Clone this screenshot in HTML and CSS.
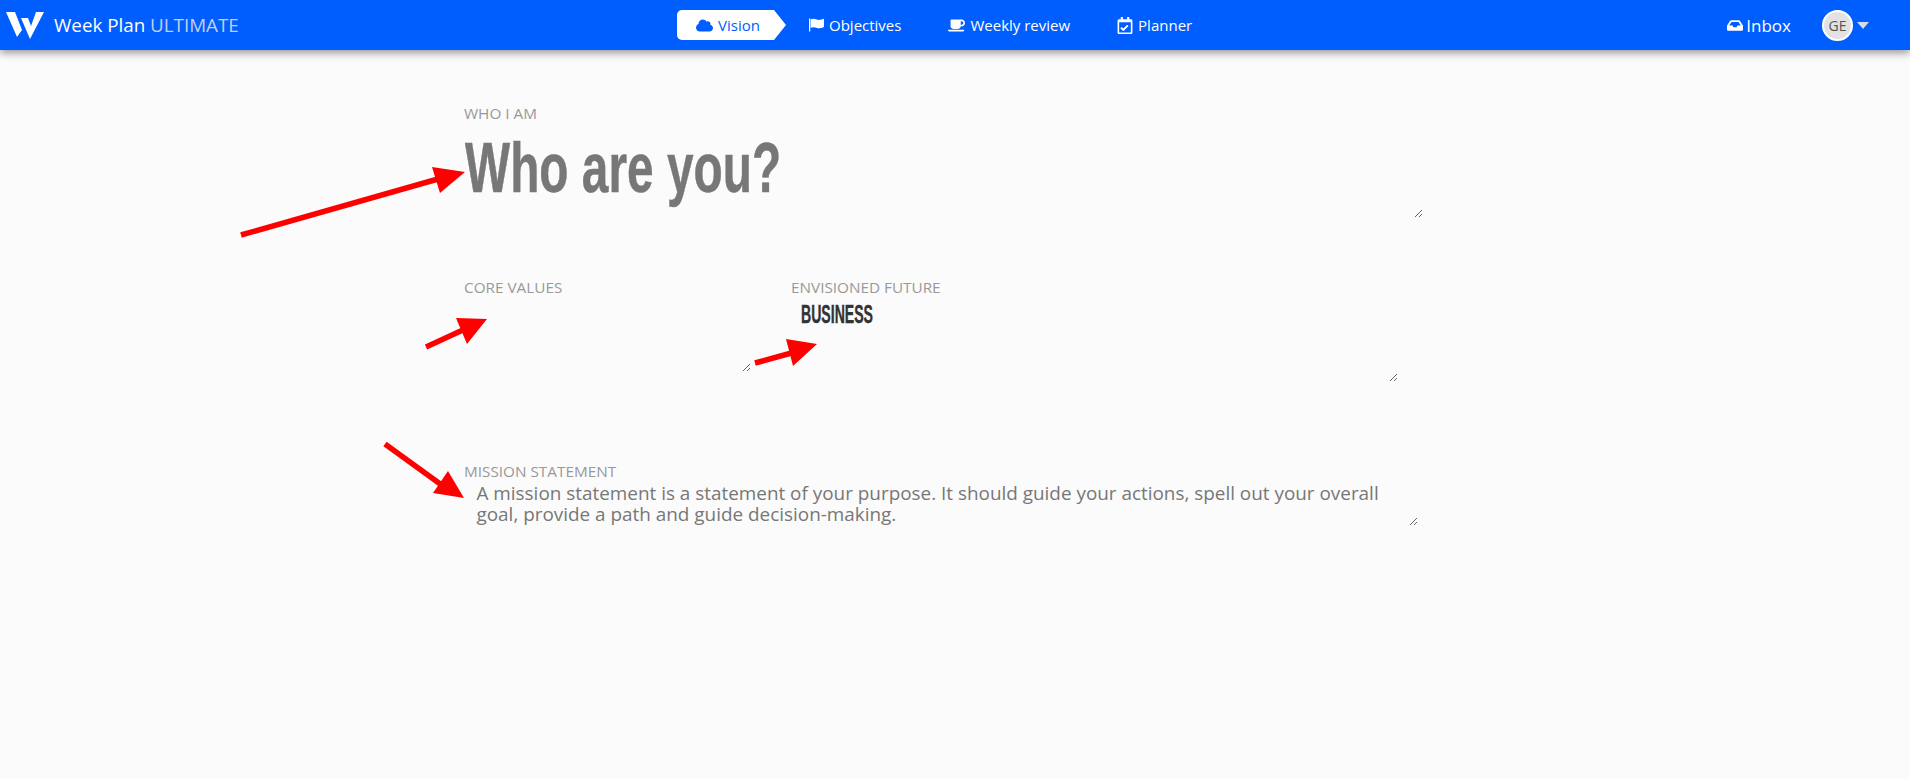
FILE: index.html
```html
<!DOCTYPE html>
<html lang="en">
<head>
<meta charset="utf-8">
<title>Week Plan ULTIMATE</title>
<link rel="stylesheet" href="styles.css">
</head>
<body>
<header class="topbar">
  <a class="brand">
    <svg class="logo" viewBox="0 0 38 28"><path d="M0 1h9l7 18-5 7z"/><path d="M15 7h7l3 8 5-14h8L24 28z"/></svg>
    <span class="brand-name">Week Plan <span class="brand-sub">ULTIMATE</span></span>
  </a>
  <nav class="nav">
    <a class="tab tab-active">
      <svg class="ico" viewBox="0 0 640 512"><path d="M537.6 226.6c4.1-10.7 6.4-22.4 6.4-34.6 0-53-43-96-96-96-19.7 0-38.1 6-53.3 16.2C367 64.2 315.3 32 256 32c-88.4 0-160 71.6-160 160 0 2.7.1 5.4.2 8.1C40.2 219.8 0 273.2 0 336c0 79.5 64.5 144 144 144h368c70.7 0 128-57.3 128-128 0-61.9-44-113.6-102.400-125.400z"/></svg>
      Vision
    </a>
    <a class="tab">
      <svg class="ico ico-flag" viewBox="0 0 532 460"><path d="M0 0h44v460H0zM60 30c30-12 62-20 100-20 75 0 120 40 190 40 55 0 110-22 182-40v290c-60 30-115 46-170 46-75 0-125-40-195-40-40 0-75 8-107 22z"/></svg>
      Objectives
    </a>
    <a class="tab">
      <svg class="ico" viewBox="0 0 640 512"><path d="M192 384h192c53 0 96-43 96-96h32c71 0 128-57 128-128S583 32 512 32H120c-13 0-24 11-24 24v232c0 53 43 96 96 96zM512 96c35 0 64 29 64 64s-29 64-64 64h-32V96h32zm48 384H48c-48 0-61-64-36-64h584c25 0 12 64-36 64z"/></svg>
      Weekly review
    </a>
    <a class="tab">
      <svg class="ico ico-tall" viewBox="0 0 448 512"><path d="M400 64h-48V12c0-7-5-12-12-12h-40c-7 0-12 5-12 12v52H160V12c0-7-5-12-12-12h-40c-7 0-12 5-12 12v52H48C21 64 0 85 0 112v352c0 27 21 48 48 48h352c27 0 48-21 48-48V112c0-27-21-48-48-48zm-6 400H54c-3 0-6-3-6-6V160h352v298c0 3-3 6-6 6zm-70-184-142 141c-5 5-12 5-17 0l-75-76c-5-5-5-12 0-17l23-22c5-5 12-5 17 0l44 44 110-109c5-5 12-5 17 0l23 23c5 5 5 12 0 16z"/></svg>
      Planner
    </a>
  </nav>
  <div class="account">
    <a class="inbox">
      <svg class="ico ico-inbox" viewBox="0 0 576 512"><path d="M567.9 243.9 462.9 86.4A48 48 0 0 0 423 65H153a48 48 0 0 0-40 21.400L8.100 243.900A48 48 0 0 0 0 270.500V400c0 26.500 21.500 48 48 48h480c26.500 0 48-21.500 48-48V270.500a48 48 0 0 0-8.100-26.600zM162.900 128h250.300l85.300 128H376l-32 64H232l-32-64H77.500z"/></svg>
      Inbox
    </a>
    <span class="avatar">GE</span>
    <span class="caret"></span>
  </div>
</header>

<main class="vision">
  <section class="field field-who">
    <label class="field-label" for="who">WHO I AM</label>
    <textarea id="who" class="input input-who"></textarea>
    <span class="display display-who">Who are you?</span>
  </section>
  <section class="columns">
    <div class="field">
      <label class="field-label" for="core">CORE VALUES</label>
      <textarea id="core" class="input input-core"></textarea>
    </div>
    <div class="field">
      <label class="field-label" for="future">ENVISIONED FUTURE</label>
      <textarea id="future" class="input input-future"></textarea>
      <span class="display display-future">BUSINESS</span>
    </div>
  </section>
  <section class="field">
    <label class="field-label" for="mission">MISSION STATEMENT</label>
    <textarea id="mission" class="input input-mission" placeholder="A mission statement is a statement of your purpose. It should guide your actions, spell out your overall goal, provide a path and guide decision-making."></textarea>
  </section>
</main>

<svg class="annotations" viewBox="0 0 1910 779">
  <path class="arrow-line" d="M241 235 445 177"/>
  <path class="arrow-head" d="M465 172 432 167 440 193z"/>
  <path class="arrow-line" d="M426 347 465 329"/>
  <path class="arrow-head" d="M487 319 456 318 467 344z"/>
  <path class="arrow-line" d="M755 363 795 352"/>
  <path class="arrow-head" d="M817 344 786 339 793 366z"/>
  <path class="arrow-line" d="M385 444 443 486"/>
  <path class="arrow-head" d="M464 498 448 471 433 493z"/>
</svg>
</body>
</html>
```
FILE: styles.css
```css
* { box-sizing: border-box; }
html, body { height: 100%; }
body {
  margin: 0;
  background: #fbfbfb;
  font-family: "Open Sans", "Noto Sans", sans-serif;
  overflow: hidden;
}
.topbar {
  display: flex;
  align-items: center;
  height: 50px;
  background: #005eff;
  color: #fff;
  box-shadow: 0 3px 8px rgba(0, 0, 0, .4);
}
.brand {
  display: flex;
  align-items: center;
  width: 677px;
  padding-left: 6px;
  gap: 10px;
}
.logo { width: 38px; height: 28px; fill: #fff; }
.brand-name { font-size: 18.800px; }
.brand-sub { color: #c3cfe6; }
.nav { display: flex; align-items: center; font-size: 15px; }
.tab {
  display: flex;
  align-items: center;
  gap: 5px;
  height: 30px;
  margin-right: 47px;
  color: #fff;
}
.tab-active {
  width: 109px;
  margin-right: 23px;
  padding-left: 19px;
  background: #fff;
  color: #005eff;
  border-radius: 5px 0 0 5px;
  clip-path: polygon(0 0, 97px 0, 109px 50%, 97px 100%, 0 100%);
}
.ico { width: 17px; height: 15px; fill: currentColor; flex: none; }
.ico-flag { width: 15px; height: 14px; }
.ico-tall { width: 16px; height: 17px; }
.ico-inbox { width: 16px; }
.account {
  display: flex;
  align-items: center;
  margin-left: auto;
  padding-right: 41px;
}
.inbox {
  display: flex;
  align-items: center;
  gap: 3px;
  margin-right: 31px;
  font-size: 17px;
}
.avatar {
  display: flex;
  align-items: center;
  justify-content: center;
  width: 31px;
  height: 31px;
  border: 2px solid #fff;
  border-radius: 50%;
  background: #e2e2e2;
  color: #555;
  font-size: 14px;
}
.caret {
  width: 0;
  height: 0;
  margin-left: 4px;
  border: 6px solid transparent;
  border-top: 7px solid #d5dbe6;
  border-bottom: 0;
}
.vision {
  display: flex;
  flex-direction: column;
  padding: 53px 0 0 464px;
}
.field { position: relative; display: flex; flex-direction: column; }
.field-label {
  height: 20px;
  font-size: 15.300px;
  line-height: 20px;
  color: #999;
}
.input {
  display: block;
  border: 0;
  outline: 0;
  background: transparent;
  font-family: inherit;
}
.input::placeholder { color: #777; opacity: 1; }
.display {
  position: absolute;
  left: 0;
  font-family: "Liberation Sans", sans-serif;
  font-weight: 700;
  white-space: nowrap;
  transform-origin: left center;
  pointer-events: none;
}
.display-who {
  top: 23px;
  left: 1px;
  color: #777;
  font-size: 70px;
  line-height: 84px;
  -webkit-text-stroke: .5px #777;
  transform: scaleX(.683);
}
.display-future {
  top: 22px;
  left: 10px;
  color: #333;
  font-size: 25px;
  line-height: 30px;
  -webkit-text-stroke: .4px #333;
  transform: scaleX(.563);
}
.field-who { margin-bottom: 59px; }
.input-who { width: 959px; height: 95px; }
.columns { display: flex; gap: 40px; margin-bottom: 79px; }
.input-core { width: 287px; height: 75px; }
.input-future { width: 607px; height: 85px; }
.input-mission {
  width: 954px;
  height: 45px;
  padding: 2px 12.500px 0;
  font-size: 18.900px;
  line-height: 21px;
}
.annotations {
  position: absolute;
  left: 0;
  top: 0;
  width: 1910px;
  height: 779px;
  pointer-events: none;
}
.arrow-line { stroke: #f00; stroke-width: 5.500; fill: none; }
.arrow-head { fill: #f00; }
```
